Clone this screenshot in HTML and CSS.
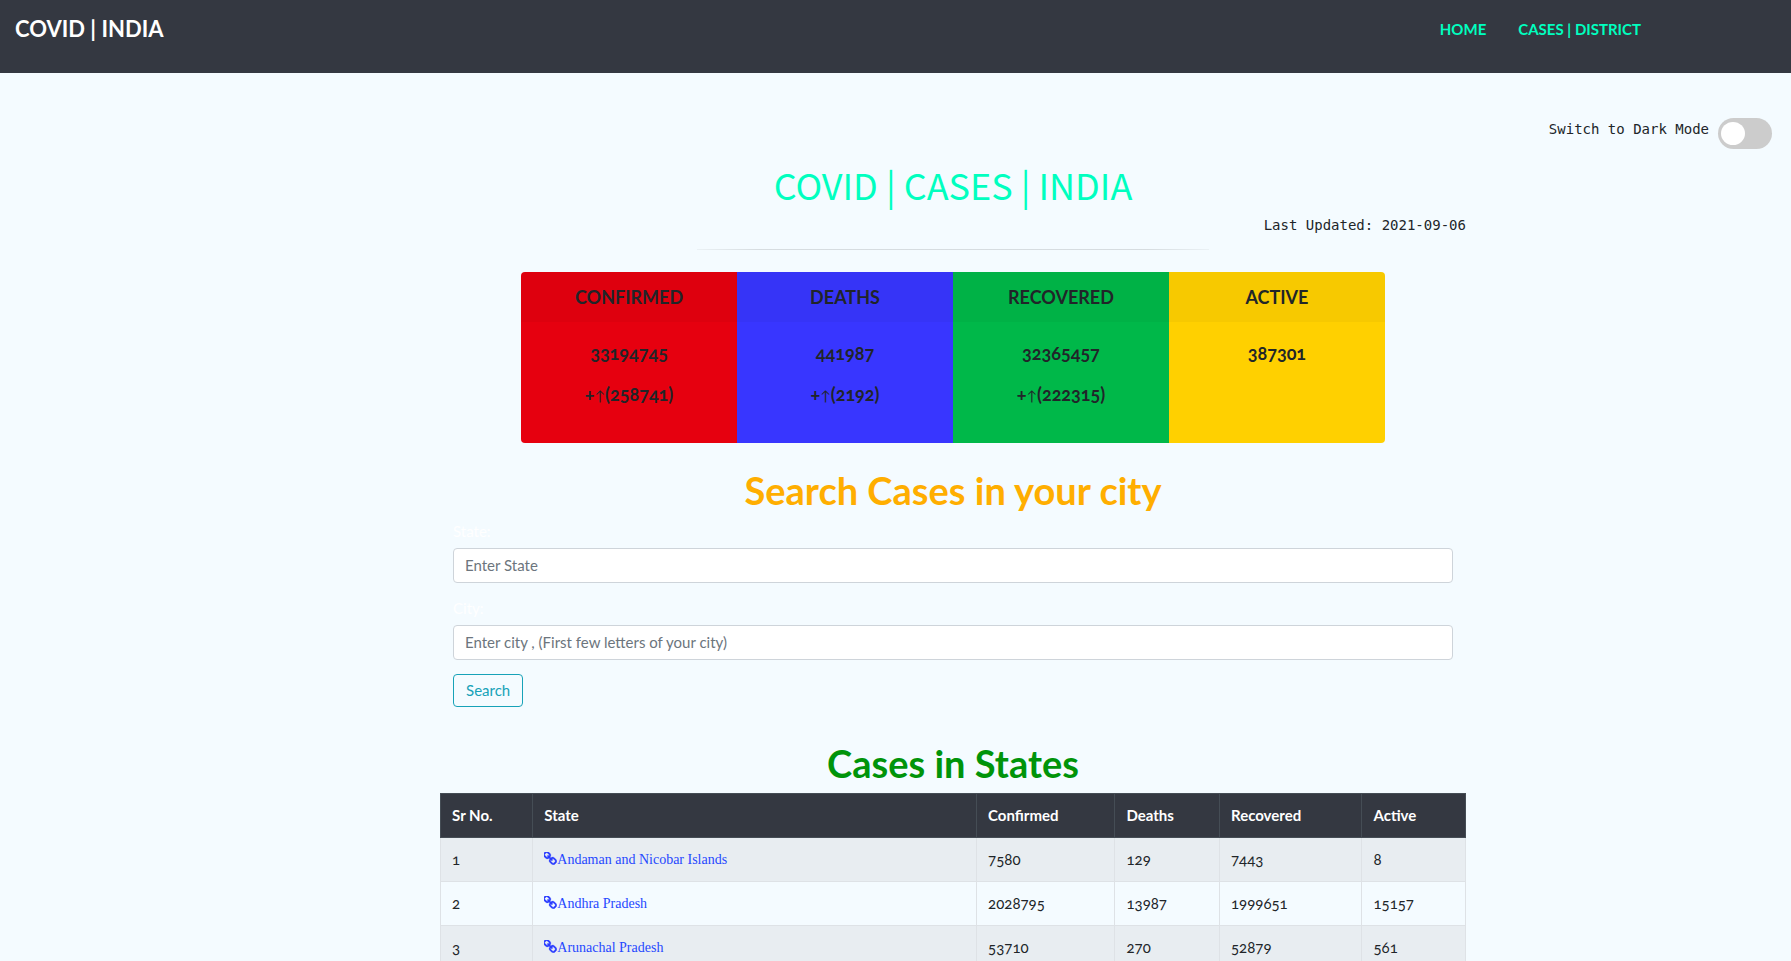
FILE: index.html
```html
<!DOCTYPE html>
<html lang="en">
<head>
<meta charset="utf-8">
<title>COVID | INDIA</title>
<link rel="stylesheet" href="styles.css">
</head>
<body>
<svg class="sprite" aria-hidden="true">
  <symbol id="chain" viewBox="124 124 1544 1544">
    <path d="M1456 1216q0-40-28-68l-208-208q-28-28-68-28-42 0-72 32 3 3 19 18.500t21.500 21.500 15 19 13 25.500 3.500 27.500q0 40-28 68t-68 28q-15 0-27.500-3.500t-25.500-13-19-15-21.500-21.500-18.500-19q-33 31-33 73 0 40 28 68l206 207q27 27 68 27 40 0 68-26l147-146q28-28 28-67zM753 511q0-40-28-68l-206-207q-28-28-68-28-39 0-68 27l-147 146q-28 28-28 67 0 40 28 68l208 208q27 27 68 27 42 0 72-31-3-3-19-18.500t-21.500-21.500-15-19-13-25.500-3.500-27.500q0-40 28-68t68-28q15 0 27.500 3.500t25.500 13 19 15 21.500 21.500 18.500 19q33-31 33-73zM1648 1216q0 120-85 203l-147 146q-83 83-203 83-121 0-204-85l-206-207q-83-83-83-203 0-123 88-209l-88-88q-86 88-208 88-120 0-204-84l-208-208q-84-84-84-204t85-203l147-146q83-83 203-83 121 0 204 85l206 207q83 83 83 203 0 123-88 209l88 88q86-88 208-88 120 0 204 84l208 208q84 84 84 204z"/>
  </symbol>
</svg>
<header class="navbar">
  <a class="brand" href="#">COVID | INDIA</a>
  <nav class="nav-links">
    <a href="#">HOME</a>
    <a href="#">CASES | DISTRICT</a>
  </nav>
</header>
<div class="mode">
  <label for="dark-mode">Switch to Dark Mode</label>
  <input class="switch" type="checkbox" id="dark-mode">
</div>
<main class="page">
  <h1 class="title">COVID | CASES | INDIA</h1>
  <p class="updated">Last Updated: 2021-09-06</p>
  <hr class="rule">
  <section class="cards">
    <article class="card confirmed"><h2>CONFIRMED</h2><p>33194745</p><p>+<span class="arrow">↑</span>(258741)</p></article>
    <article class="card deaths"><h2>DEATHS</h2><p>441987</p><p>+<span class="arrow">↑</span>(2192)</p></article>
    <article class="card recovered"><h2>RECOVERED</h2><p>32365457</p><p>+<span class="arrow">↑</span>(222315)</p></article>
    <article class="card active"><h2>ACTIVE</h2><p>387301</p></article>
  </section>
  <h2 class="heading search-heading">Search Cases in your city</h2>
  <form class="search">
    <label for="state">State:</label>
    <input type="text" id="state" placeholder="Enter State">
    <label for="city">City:</label>
    <input type="text" id="city" placeholder="Enter city , (First few letters of your city)">
    <button type="button">Search</button>
  </form>
  <h2 class="heading states-heading">Cases in States</h2>
  <table class="states">
    <colgroup><col class="c-no"><col><col class="c-confirmed"><col class="c-deaths"><col class="c-recovered"><col class="c-active"></colgroup>
    <thead>
      <tr><th>Sr No.</th><th>State</th><th>Confirmed</th><th>Deaths</th><th>Recovered</th><th>Active</th></tr>
    </thead>
    <tbody>
      <tr><td>1</td><td><a href="#"><svg class="chain"><use href="#chain"/></svg>Andaman and Nicobar Islands</a></td><td>7580</td><td>129</td><td>7443</td><td>8</td></tr>
      <tr><td>2</td><td><a href="#"><svg class="chain"><use href="#chain"/></svg>Andhra Pradesh</a></td><td>2028795</td><td>13987</td><td>1999651</td><td>15157</td></tr>
      <tr><td>3</td><td><a href="#"><svg class="chain"><use href="#chain"/></svg>Arunachal Pradesh</a></td><td>53710</td><td>270</td><td>52879</td><td>561</td></tr>
    </tbody>
  </table>
</main>
</body>
</html>
```
FILE: styles.css
```css
* { box-sizing: border-box; }

body {
  margin: 0;
  background: #f4fbff;
  color: #212529;
  font-family: Lato, "Open Sans", sans-serif;
  font-size: 15px;
  line-height: 22px;
  font-variant-numeric: oldstyle-nums;
}

h1, h2, p { margin: 0; }
a { text-decoration: none; }
.sprite { display: none; }

.navbar {
  display: flex;
  justify-content: space-between;
  align-items: flex-start;
  height: 73px;
  padding: 13px 150px 0 15px;
  background: #343841;
}
.brand {
  color: #fff;
  font-size: 22px;
  line-height: 32px;
  font-weight: 700;
}
.nav-links {
  display: flex;
  gap: 32px;
  padding-top: 5px;
}
.nav-links a {
  color: #00ffbf;
  font-size: 15px;
  font-weight: 700;
}

.mode, .updated {
  font-family: "DejaVu Sans Mono", monospace;
  font-size: 14px;
  font-variant-numeric: normal;
}
.mode {
  display: flex;
  justify-content: flex-end;
  gap: 9px;
  padding: 45px 19px 0 0;
}
.switch {
  appearance: none;
  display: flex;
  width: 54px;
  height: 31px;
  margin: 0;
  padding: 4px 3px;
  border-radius: 16px;
  background: #ccc;
}
.switch::before {
  content: "";
  width: 24px;
  height: 23px;
  border-radius: 50%;
  background: #fff;
}

.page {
  display: flex;
  flex-direction: column;
  margin: 0 18.15% 0 24.57%;
}
.title {
  margin-top: 13px;
  color: #00ffbf;
  font-family: "Noto Sans CJK SC", sans-serif;
  font-size: 36px;
  line-height: 44px;
  font-weight: 400;
  text-align: center;
}
.updated {
  margin-top: 8px;
  text-align: right;
}
.rule {
  width: 50%;
  height: 1px;
  margin: 13px auto 22px;
  border: 0;
  background: linear-gradient(to right, rgba(0, 0, 0, 0.04), rgba(0, 0, 0, 0.12) 12%, rgba(0, 0, 0, 0.12) 88%, rgba(0, 0, 0, 0.04));
}

.cards {
  display: grid;
  grid-template-columns: repeat(4, 1fr);
  width: 84.2%;
  margin: 0 auto;
  border-radius: 4px;
  overflow: hidden;
}
.card {
  padding-bottom: 34px;
  font-size: 18px;
  line-height: 27px;
  font-weight: 700;
  text-align: center;
}
.card h2 {
  margin-bottom: 18px;
  padding: 12px 0 11px;
  background: rgba(0, 0, 0, 0.03);
  font-size: 18px;
  line-height: 27px;
}
.card p + p { margin-top: 14px; }
.arrow { font-weight: 400; font-size: 14px; }
.confirmed { background: #e6000f; }
.deaths { background: #3836ff; }
.recovered { background: #00b849; }
.active { background: #ffd000; }

.heading {
  font-size: 38px;
  line-height: 43px;
  font-weight: 700;
  text-align: center;
}
.search-heading {
  margin-top: 26px;
  color: #ffae00;
}
.states-heading {
  margin-top: 35px;
  color: #00940a;
}

.search {
  display: flex;
  flex-direction: column;
  align-items: flex-start;
  padding: 8px 13px 0;
}
.search label {
  margin-bottom: 6px;
  color: #fff;
}
.search input {
  width: 100%;
  height: 35px;
  margin-bottom: 14px;
  padding: 0 11px 1px;
  border: 1px solid #ced4da;
  border-radius: 4px;
  background: #fff;
  color: #495057;
  font: inherit;
}
.search input::placeholder { color: #6c757d; opacity: 1; }
.search button {
  height: 33px;
  padding: 0 12px 1px;
  border: 1px solid #17a2b8;
  border-radius: 4px;
  background: transparent;
  color: #17a2b8;
  font: inherit;
}

.states {
  width: 100%;
  margin-top: 8px;
  border-collapse: collapse;
  table-layout: fixed;
}
.c-no { width: 9%; }
.c-confirmed { width: 13.5%; }
.c-deaths { width: 10.2%; }
.c-recovered { width: 13.9%; }
.c-active { width: 10.1%; }
.states th, .states td {
  height: 44px;
  padding: 0 11px 1px;
  border: 1px solid #dee2e6;
  text-align: left;
}
.states th {
  border-color: #454d55;
  background: #343841;
  color: #fff;
}
.states tbody tr:nth-child(odd) { background: #e8edf1; }
.states a {
  color: #2648ff;
  font-family: "Liberation Serif", serif;
  font-size: 14px;
}
.chain {
  width: 13px;
  height: 13px;
  vertical-align: -1px;
  fill: #2a3cff;
  stroke: #2a3cff;
  stroke-width: 30;
}
```
